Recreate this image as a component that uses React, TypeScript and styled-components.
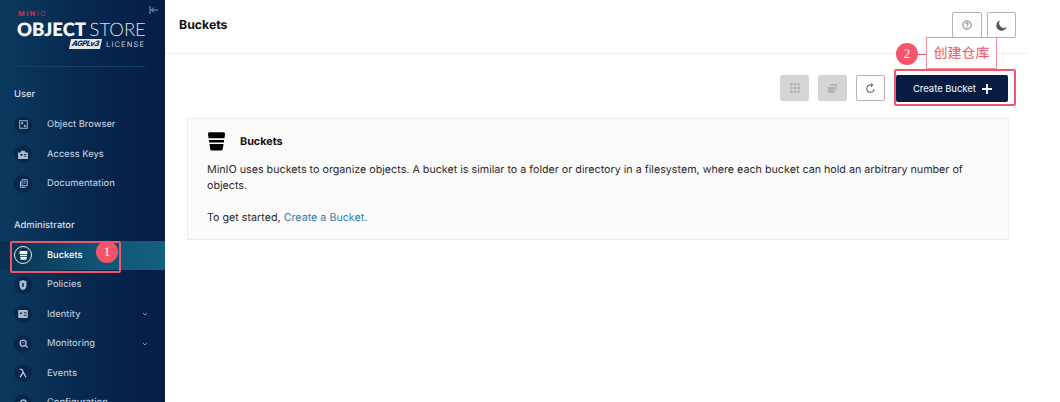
import React from "react";
import styled, { createGlobalStyle } from "styled-components";

const Global = createGlobalStyle`
  html, body { margin: 0; padding: 0; background: #fff; overflow: hidden; }
  body { font-family: Inter, "Liberation Sans", sans-serif; text-rendering: geometricPrecision; }
  * { box-sizing: border-box; }
`;

const Page = styled.div`
  position: relative;
  width: 1060px;
  height: 402px;
  display: flex;
  overflow: hidden;
  background: #fff;
`;

const Sidebar = styled.aside`
  width: 165px;
  height: 402px;
  flex: none;
  overflow: hidden;
  color: #fff;
  background: linear-gradient(90deg, #0c3a5e 0%, #08294f 45%, #061c47 100%);
`;

const LogoArea = styled.div`
  position: relative;
  height: 67px;
  margin: 0 20px 0 17px;
  padding-top: 10px;
  border-bottom: 1px solid #14406a;
`;

const MinioMark = styled.div`
  margin-left: 1px;
  font-size: 7px;
  line-height: 7px;
  font-weight: 800;
  letter-spacing: 1.6px;
  color: #c72c48;
  span { font-weight: 400; }
`;

const Product = styled.div`
  margin-top: 2px;
  font-size: 18.5px;
  line-height: 20px;
  white-space: nowrap;
  letter-spacing: -0.05px;
  font-weight: 800;
  font-family: Lato, Inter, sans-serif;
  color: #f2f5f8;
  span { font-weight: 300; color: #d8e0e9; }
`;

const LicenseRow = styled.div`
  display: flex;
  align-items: center;
  justify-content: flex-end;
  gap: 5px;
  margin-top: 0;
  font-size: 7.5px;
  letter-spacing: 1.1px;
  color: #c5d0dc;
`;

const AgplBadge = styled.span`
  display: inline-block;
  padding: 0 2px;
  font-size: 7.5px;
  line-height: 10px;
  font-weight: 800;
  font-style: italic;
  letter-spacing: -0.4px;
  color: #0a2a50;
  background: #e4e8ec;
  transform: skewX(-12deg);
`;

const Collapse = styled.div`
  position: absolute;
  top: 5px;
  right: -14px;
  width: 10px;
  height: 10px;
  color: #aebccb;
  display: flex;
`;

const SectionLabel = styled.div<{ $top: number }>`
  margin: ${(p) => p.$top}px 0 0 14px;
  height: 14px;
  font-size: 9.4px;
  line-height: 14px;
  font-weight: 500;
  color: #d5dee8;
`;

const Nav = styled.nav`
  display: flex;
  flex-direction: column;
  margin-top: 8px;
`;

const Row = styled.div<{ $active?: boolean }>`
  height: 29.5px;
  display: flex;
  align-items: center;
  padding: 0 15px 0 14px;
  font-size: 9.3px;
  font-weight: 500;
  color: ${(p) => (p.$active ? "#ffffff" : "#b4c4d6")};
  background: ${(p) => (p.$active ? "linear-gradient(90deg, #08304f 0%, #0f5577 60%, #14607f 100%)" : "transparent")};
`;

const IconWrap = styled.span<{ $ring?: boolean }>`
  width: 18px;
  height: 18px;
  flex: none;
  margin-right: 15px;
  border-radius: 50%;
  display: flex;
  align-items: center;
  justify-content: center;
  background: ${(p) => (p.$ring ? "transparent" : "rgba(4,24,58,.45)")};
  border: ${(p) => (p.$ring ? "1px solid #dfe7ee" : "0")};
  color: #a9bccf;
`;

const RowLabel = styled.span`
  flex: 1;
`;

const Chevron = styled.span`
  width: 10px;
  height: 10px;
  display: flex;
  color: #7f94aa;
`;

const Main = styled.main`
  flex: 1;
  min-width: 0;
  display: flex;
  flex-direction: column;
`;

const Header = styled.header`
  width: 862px;
  height: 54px;
  flex: none;
  display: flex;
  align-items: flex-start;
  justify-content: space-between;
  padding: 12px 11px 0 14px;
  border-bottom: 1px solid #eeeeee;
`;

const Title = styled.h1`
  margin: 0;
  font-size: 12.3px;
  line-height: 26px;
  font-weight: 700;
  color: #111;
`;

const HeaderActions = styled.div`
  display: flex;
  gap: 5px;
`;

const IconButton = styled.button<{ $disabled?: boolean; $wide?: boolean }>`
  width: ${(p) => (p.$wide ? 30 : 29)}px;
  height: 26px;
  padding: 0;
  display: flex;
  align-items: center;
  justify-content: center;
  border-radius: 2px;
  border: 1px solid ${(p) => (p.$disabled ? "#d4d5d4" : "#b4b4b4")};
  background: ${(p) => (p.$disabled ? "#d4d5d4" : "#fff")};
  color: ${(p) => (p.$disabled ? "#b4b5b4" : "#555")};
`;

const Toolbar = styled.div`
  width: 843px;
  margin-top: 21px;
  display: flex;
  align-items: flex-start;
  gap: 9px;
  justify-content: flex-end;
`;

const CreateButton = styled.button`
  width: 112px;
  height: 27px;
  margin-left: 2px;
  padding: 0 0 0 1px;
  display: flex;
  align-items: center;
  justify-content: center;
  gap: 6px;
  border: 0;
  border-radius: 2px;
  background: #081c42;
  color: #dfe5ec;
  font: 500 9.35px Inter, sans-serif;
`;

const InfoBox = styled.section`
  width: 822px;
  height: 122px;
  margin: 16px 0 0 22px;
  padding: 13px 19px;
  background: #fbfbfb;
  border: 1px solid #ededed;
`;

const InfoHead = styled.div`
  display: flex;
  align-items: center;
  gap: 14px;
  height: 19px;
  font-size: 10.8px;
  font-weight: 700;
  color: #111;
`;

const InfoText = styled.p`
  margin: 11px 0 0;
  font-size: 10.72px;
  line-height: 16px;
  color: #2a2a2a;
`;

const InfoLink = styled.a`
  color: #2f7fa8;
`;

const Spacer = styled.span`
  display: block;
  height: 16px;
`;

const Callout = styled.div<{ $x: number; $y: number; $w: number; $h: number }>`
  position: absolute;
  left: ${(p) => p.$x}px;
  top: ${(p) => p.$y}px;
  width: ${(p) => p.$w}px;
  height: ${(p) => p.$h}px;
  border: 2px solid #f0566b;
  border-radius: 2px;
  pointer-events: none;
`;

const StepDot = styled.div<{ $x: number; $y: number }>`
  position: absolute;
  left: ${(p) => p.$x}px;
  top: ${(p) => p.$y}px;
  width: 22px;
  height: 22px;
  border-radius: 50%;
  background: #f7546a;
  color: #fff;
  display: flex;
  align-items: center;
  justify-content: center;
  font: 13px "Liberation Serif", serif;
`;

const Connector = styled.div`
  position: absolute;
  left: 918px;
  top: 54px;
  width: 8px;
  height: 1px;
  background: #f0566b;
`;

const NoteLabel = styled.div`
  position: absolute;
  left: 926px;
  top: 37px;
  width: 71px;
  height: 32px;
  display: flex;
  align-items: center;
  justify-content: center;
  background: #fff;
  border: 1px solid #f58c9b;
  color: #f0566b;
  font: 14px "Noto Sans CJK SC", sans-serif;
`;

const BucketGlyph = ({ size = 10, color = "currentColor" }: { size?: number; color?: string }) => (
  <svg width={size} height={size} viewBox="0 0 20 20" style={{ flex: "none" }}>
    <path d="M1 1.800Q1 .2 2.600 .2H17.400Q19 .2 19 1.800L18.400 6.600H1.600z" fill={color} />
    <path d="M2 8.300H18L17.700 11H2.300z" fill={color} />
    <path d="M2.600 12.600H17.400L16.600 18Q16.400 19.600 14.800 19.600H5.200Q3.600 19.600 3.400 18z" fill={color} />
  </svg>
);

const Ico = ({ children }: { children: React.ReactNode }) => (
  <svg width="9" height="9" viewBox="0 0 12 12" fill="none" stroke="currentColor" strokeWidth="1.300">{children}</svg>
);

const rowsTop = [
  { label: "Object Browser", icon: <Ico><rect x="1" y="1" width="10" height="10" /><rect x="3" y="3" width="2.500" height="2.500" fill="currentColor" stroke="none" /><path d="M6.500 6.500h2.500v2.500H6.500z" fill="currentColor" stroke="none" /></Ico> },
  { label: "Access Keys", icon: <svg width="10" height="9" viewBox="0 0 12 11"><path d="M0 3h3l1-2h4l1 2h3v8H0z" fill="currentColor" /><circle cx="4" cy="6" r="1.300" fill="#08294f" /><rect x="7" y="5" width="3" height="1" fill="#08294f" /><rect x="7" y="7" width="3" height="1" fill="#08294f" /></svg> },
  { label: "Documentation", icon: <Ico><path d="M4 1h7v8H4zM2 3v8h7" /><path d="M6 3.500h3M6 5.500h3" strokeWidth="1" /></Ico> },
];

const rowsBottom = [
  { label: "Policies", icon: <svg width="8" height="10" viewBox="0 0 10 13"><path d="M5 0l4.500 1.500V7c0 3-2 5-4.500 6C2.500 12 .5 10 .5 7V1.500z" fill="currentColor" /><rect x="4" y="4" width="2" height="5" fill="#08294f" /></svg> },
  { label: "Identity", chevron: true, icon: <svg width="10" height="8" viewBox="0 0 12 10"><rect width="12" height="10" rx="1" fill="currentColor" /><circle cx="3.500" cy="4" r="1.300" fill="#08294f" /><rect x="7" y="3" width="3.500" height="1.200" fill="#08294f" /><rect x="7" y="6" width="3.500" height="1.200" fill="#08294f" /></svg> },
  { label: "Monitoring", chevron: true, icon: <Ico><circle cx="5.500" cy="5.500" r="4" strokeWidth="1.700" /><path d="M8.500 8.500L11.500 11.500" strokeWidth="1.800" /><path d="M3.500 6l1.500-1.500 1 1 1.200-1.200" strokeWidth="1" /></Ico> },
  { label: "Events", icon: <svg width="10" height="10" viewBox="0 0 12 12" fill="none" stroke="#cfdae6" strokeWidth="1.400"><path d="M2 1.500h2.500L9.500 11M6 5.500L2.500 11" /></svg> },
  { label: "Configuration", icon: <Ico><circle cx="6" cy="6" r="3.500" strokeWidth="2" /></Ico> },
];

const Down = () => (
  <Chevron>
    <svg width="10" height="10" viewBox="0 0 10 10" fill="none" stroke="currentColor" strokeWidth="1"><path d="M3 4l2 2 2-2" /></svg>
  </Chevron>
);

export default function App() {
  return (
    <Page>
      <Global />
      <Sidebar>
        <LogoArea>
          <MinioMark>MIN<span>IO</span></MinioMark>
          <Product>OBJECT <span>STORE</span></Product>
          <LicenseRow><AgplBadge>AGPLv3</AgplBadge>LICENSE</LicenseRow>
          <Collapse>
            <svg width="10" height="10" viewBox="0 0 10 10" fill="none" stroke="currentColor" strokeWidth="0.800"><path d="M1 1v8M9 5H2.500M5 2.500L2.500 5 5 7.500" /></svg>
          </Collapse>
        </LogoArea>
        <SectionLabel $top={21}>User</SectionLabel>
        <Nav>
          {rowsTop.map((r) => (
            <Row key={r.label}><IconWrap>{r.icon}</IconWrap><RowLabel>{r.label}</RowLabel></Row>
          ))}
        </Nav>
        <SectionLabel $top={20}>Administrator</SectionLabel>
        <Nav>
          <Row $active><IconWrap $ring><BucketGlyph size={9} color="#fff" /></IconWrap><RowLabel>Buckets</RowLabel></Row>
          {rowsBottom.map((r) => (
            <Row key={r.label}><IconWrap>{r.icon}</IconWrap><RowLabel>{r.label}</RowLabel>{r.chevron && <Down />}</Row>
          ))}
        </Nav>
      </Sidebar>
      <Main>
        <Header>
          <Title>Buckets</Title>
          <HeaderActions>
            <IconButton $wide aria-label="Help">
              <svg width="10" height="10" viewBox="0 0 12 12" fill="none" stroke="currentColor"><circle cx="6" cy="6" r="5" /><path d="M4.500 4.700C4.500 3.800 5.200 3.300 6 3.300s1.500.5 1.500 1.300C7.500 5.700 6 5.800 6 7M6 8v1" /></svg>
            </IconButton>
            <IconButton aria-label="Theme">
              <svg width="11" height="11" viewBox="0 0 12 12"><path d="M4.500 0.500A5.700 5.700 0 1 0 11.500 7.500 5 5 0 0 1 4.500 0.500z" fill="currentColor" /></svg>
            </IconButton>
          </HeaderActions>
        </Header>
        <Toolbar>
          <IconButton $disabled aria-label="Select">
            <svg width="10" height="10" viewBox="0 0 10 10" fill="currentColor"><path d="M0 0h2.600v2.600H0zM3.700 0h2.600v2.600H3.700zM7.400 0H10v2.600H7.400zM0 3.700h2.600v2.600H0zM3.700 3.700h2.600v2.600H3.700zM7.400 3.700H10v2.600H7.400zM0 7.400h2.600V10H0zM3.700 7.400h2.600V10H3.700zM7.400 7.400H10V10H7.400z" /></svg>
          </IconButton>
          <IconButton $disabled aria-label="Copy">
            <svg width="11" height="11" viewBox="0 0 12 12" fill="currentColor"><path d="M3 1h8v7H9.500V3H3zM1 4h7.500v7H1z" /></svg>
          </IconButton>
          <IconButton aria-label="Refresh">
            <svg width="11" height="11" viewBox="0 0 12 12" fill="none" stroke="currentColor" strokeWidth="1.100"><path d="M9.800 6.500A3.900 3.900 0 1 1 6 2.300h2" /><path d="M6.600 .6L8.300 2.300 6.600 4" /></svg>
          </IconButton>
          <CreateButton>
            Create Bucket
            <svg width="10" height="10" viewBox="0 0 10 10" stroke="#fff" strokeWidth="1.800"><path d="M5 0v10M0 5h10" /></svg>
          </CreateButton>
        </Toolbar>
        <InfoBox>
          <InfoHead><BucketGlyph size={19} color="#000" />Buckets</InfoHead>
          <InfoText>
            MinIO uses buckets to organize objects. A bucket is similar to a folder or directory in a filesystem, where each bucket can hold an arbitrary number of objects.
            <Spacer />
            To get started, <InfoLink>Create a Bucket.</InfoLink>
          </InfoText>
        </InfoBox>
      </Main>
      <Callout $x={10} $y={241} $w={111} $h={32} />
      <StepDot $x={96} $y={241}>1</StepDot>
      <Callout $x={894} $y={69} $w={122} $h={37} />
      <Connector />
      <StepDot $x={896} $y={43}>2</StepDot>
      <NoteLabel>创建仓库</NoteLabel>
    </Page>
  );
}
